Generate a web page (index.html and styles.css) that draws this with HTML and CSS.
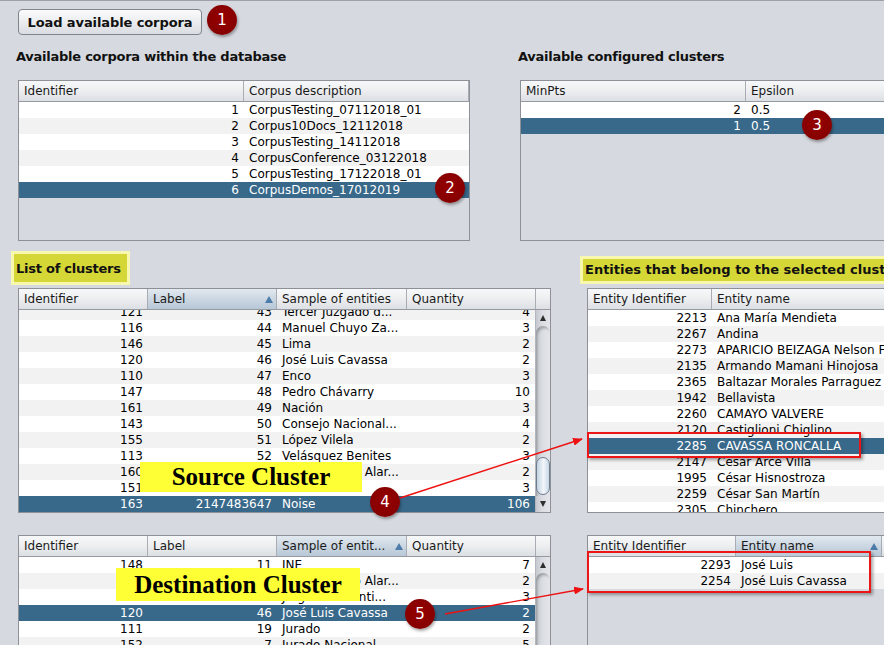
FILE: index.html
```html
<!DOCTYPE html>
<html>
<head>
<meta charset="utf-8">
<link rel="stylesheet" href="styles.css">
</head>
<body>
<div class="app">
  <div class="topbar"><button class="btn">Load available corpora</button></div>

  <div class="sec sec1">
    <div class="panel">
      <div class="title">Available corpora within the database</div>
      <div class="table t-corpora">
        <div class="thead"><div class="th">Identifier</div><div class="th">Corpus description</div></div>
        <div class="tbody"><div class="rows">
          <div class="tr"><div class="td num">1</div><div class="td">CorpusTesting_07112018_01</div></div>
          <div class="tr alt"><div class="td num">2</div><div class="td">Corpus10Docs_12112018</div></div>
          <div class="tr"><div class="td num">3</div><div class="td">CorpusTesting_14112018</div></div>
          <div class="tr alt"><div class="td num">4</div><div class="td">CorpusConference_03122018</div></div>
          <div class="tr"><div class="td num">5</div><div class="td">CorpusTesting_17122018_01</div></div>
          <div class="tr sel"><div class="td num">6</div><div class="td">CorpusDemos_17012019</div></div>
        </div></div>
      </div>
    </div>
    <div class="panel">
      <div class="title">Available configured clusters</div>
      <div class="table t-config">
        <div class="thead"><div class="th">MinPts</div><div class="th">Epsilon</div></div>
        <div class="tbody"><div class="rows">
          <div class="tr"><div class="td num">2</div><div class="td">0.5</div></div>
          <div class="tr sel"><div class="td num">1</div><div class="td">0.5</div></div>
        </div></div>
      </div>
    </div>
  </div>

  <div class="sec sec2">
    <div class="panel">
      <div class="label label-left">List of clusters</div>
      <div class="table t-clusters">
        <div class="thead"><div class="th">Identifier</div><div class="th sorted"><span>Label</span><span class="sort-up"></span></div><div class="th">Sample of entities</div><div class="th">Quantity</div><div class="th corner"></div></div>
        <div class="tbody">
          <div class="rows scrolled">
            <div class="tr alt"><div class="td num">121</div><div class="td num">43</div><div class="td">Tercer Juzgado d...</div><div class="td num">4</div></div>
            <div class="tr"><div class="td num">116</div><div class="td num">44</div><div class="td">Manuel Chuyo Za...</div><div class="td num">3</div></div>
            <div class="tr alt"><div class="td num">146</div><div class="td num">45</div><div class="td">Lima</div><div class="td num">2</div></div>
            <div class="tr"><div class="td num">120</div><div class="td num">46</div><div class="td">José Luis Cavassa</div><div class="td num">2</div></div>
            <div class="tr alt"><div class="td num">110</div><div class="td num">47</div><div class="td">Enco</div><div class="td num">3</div></div>
            <div class="tr"><div class="td num">147</div><div class="td num">48</div><div class="td">Pedro Chávarry</div><div class="td num">10</div></div>
            <div class="tr alt"><div class="td num">161</div><div class="td num">49</div><div class="td">Nación</div><div class="td num">3</div></div>
            <div class="tr"><div class="td num">143</div><div class="td num">50</div><div class="td">Consejo Nacional...</div><div class="td num">4</div></div>
            <div class="tr alt"><div class="td num">155</div><div class="td num">51</div><div class="td">López Vilela</div><div class="td num">2</div></div>
            <div class="tr"><div class="td num">113</div><div class="td num">52</div><div class="td">Velásquez Benites</div><div class="td num">3</div></div>
            <div class="tr alt"><div class="td num">160</div><div class="td num">53</div><div class="td">Eduardo Pino Alar...</div><div class="td num">2</div></div>
            <div class="tr"><div class="td num">151</div><div class="td num">54</div><div class="td">Narcón</div><div class="td num">3</div></div>
            <div class="tr sel"><div class="td num">163</div><div class="td num">2147483647</div><div class="td">Noise</div><div class="td num">106</div></div>
          </div>
          <div class="vscroll">
            <div class="sb-btn"><span class="tri-up"></span></div>
            <div class="sb-track"><div class="sb-thumb thumb-low"></div></div>
            <div class="sb-btn"><span class="tri-down"></span></div>
          </div>
        </div>
      </div>
    </div>
    <div class="panel">
      <div class="label label-right">Entities that belong to the selected cluster</div>
      <div class="table t-entities">
        <div class="thead"><div class="th">Entity Identifier</div><div class="th">Entity name</div></div>
        <div class="tbody"><div class="rows">
          <div class="tr"><div class="td num">2213</div><div class="td">Ana María Mendieta</div></div>
          <div class="tr alt"><div class="td num">2267</div><div class="td">Andina</div></div>
          <div class="tr"><div class="td num">2273</div><div class="td">APARICIO BEIZAGA Nelson Fidel</div></div>
          <div class="tr alt"><div class="td num">2135</div><div class="td">Armando Mamani Hinojosa</div></div>
          <div class="tr"><div class="td num">2365</div><div class="td">Baltazar Morales Parraguez</div></div>
          <div class="tr alt"><div class="td num">1942</div><div class="td">Bellavista</div></div>
          <div class="tr"><div class="td num">2260</div><div class="td">CAMAYO VALVERE</div></div>
          <div class="tr alt"><div class="td num">2120</div><div class="td">Castiglioni Chiglino</div></div>
          <div class="tr sel"><div class="td num">2285</div><div class="td">CAVASSA RONCALLA</div></div>
          <div class="tr alt"><div class="td num">2147</div><div class="td">César Arce Villa</div></div>
          <div class="tr"><div class="td num">1995</div><div class="td">César Hisnostroza</div></div>
          <div class="tr alt"><div class="td num">2259</div><div class="td">César San Martín</div></div>
          <div class="tr"><div class="td num">2305</div><div class="td">Chinchero</div></div>
        </div></div>
      </div>
    </div>
  </div>

  <div class="sec sec3">
    <div class="table t-dest">
      <div class="thead"><div class="th">Identifier</div><div class="th">Label</div><div class="th sorted"><span>Sample of entit...</span><span class="sort-up"></span></div><div class="th">Quantity</div><div class="th corner"></div></div>
      <div class="tbody">
        <div class="rows">
          <div class="tr"><div class="td num">148</div><div class="td num">11</div><div class="td">INE</div><div class="td num">7</div></div>
          <div class="tr alt"><div class="td num">160</div><div class="td num">53</div><div class="td">Eduardo Pino Alar...</div><div class="td num">2</div></div>
          <div class="tr"><div class="td num">134</div><div class="td num">32</div><div class="td">Jorge Luis Santi...</div><div class="td num">3</div></div>
          <div class="tr sel"><div class="td num">120</div><div class="td num">46</div><div class="td">José Luis Cavassa</div><div class="td num">2</div></div>
          <div class="tr"><div class="td num">111</div><div class="td num">19</div><div class="td">Jurado</div><div class="td num">2</div></div>
          <div class="tr alt"><div class="td num">152</div><div class="td num">7</div><div class="td">Jurado Nacional</div><div class="td num">5</div></div>
        </div>
        <div class="vscroll">
          <div class="sb-btn"><span class="tri-up"></span></div>
          <div class="sb-track"></div>
        </div>
      </div>
    </div>
    <div class="table t-members">
      <div class="thead"><div class="th">Entity Identifier</div><div class="th sorted"><span>Entity name</span><span class="sort-up"></span></div><div class="th"></div></div>
      <div class="tbody"><div class="rows">
        <div class="tr"><div class="td num">2293</div><div class="td">José Luis</div></div>
        <div class="tr alt"><div class="td num">2254</div><div class="td">José Luis Cavassa</div></div>
      </div></div>
    </div>
  </div>

  <div class="callout callout-src">Source Cluster</div>
  <div class="callout callout-dst">Destination Cluster</div>
  <div class="hl hl-1"></div>
  <div class="hl hl-2"></div>
  <svg class="arrows" width="884" height="645" viewBox="0 0 884 645">
    <defs>
      <marker id="head" markerWidth="10" markerHeight="8" refX="9" refY="4" orient="auto" markerUnits="userSpaceOnUse">
        <path d="M0,0 L10,4 L0,8 Z" fill="#ee1111"/>
      </marker>
    </defs>
    <line x1="400" y1="498" x2="582" y2="439" stroke="#ee1111" stroke-width="1.4" marker-end="url(#head)"/>
    <line x1="445" y1="614" x2="583" y2="589" stroke="#ee1111" stroke-width="1.4" marker-end="url(#head)"/>
  </svg>
  <div class="badge b1">1</div>
  <div class="badge b2">2</div>
  <div class="badge b3">3</div>
  <div class="badge b4">4</div>
  <div class="badge b5">5</div>
</div>
</body>
</html>
```

FILE: styles.css
```css
* { box-sizing: border-box; }
html, body { margin: 0; padding: 0; }
body {
  width: 884px;
  height: 645px;
  overflow: hidden;
  background: #d6d9df;
  font-family: "DejaVu Sans", sans-serif;
  font-size: 12px;
  color: #000;
}
.app {
  position: relative;
  width: 884px;
  height: 645px;
  overflow: hidden;
  border-top: 1px solid #9ea2a8;
}
.topbar { padding: 8px 0 0 18px; height: 34px; }
.btn {
  display: block;
  width: 184px;
  height: 26px;
  margin: 0;
  padding: 0;
  border: 1px solid #80858c;
  border-radius: 4px;
  background: linear-gradient(#fbfbfc, #e9ebee 55%, #d9dce1);
  font-family: "DejaVu Sans", sans-serif;
  font-weight: bold;
  font-size: 13px;
  letter-spacing: -0.1px;
  color: #111;
}
.sec { display: flex; align-items: flex-start; }
.sec1 { padding-left: 16px; gap: 48px; margin-top: 14px; }
.sec2 { padding-left: 11px; gap: 29px; margin-top: 10px; }
.sec3 { padding-left: 18px; gap: 36px; margin-top: 22px; }
.panel { display: flex; flex-direction: column; align-items: flex-start; }
.title {
  font-weight: bold;
  font-size: 13px;
  letter-spacing: -0.25px;
  height: 16px;
  line-height: 16px;
  margin-bottom: 15px;
  color: #111;
  white-space: nowrap;
}
.label {
  font-weight: bold;
  font-size: 13px;
  letter-spacing: -0.25px;
  background: #d5d736;
  border: 3px solid #f7f7ae;
  white-space: nowrap;
  color: #111;
}
.label-left { height: 34px; line-height: 29px; padding: 0 6px 0 2px; margin-bottom: 3px; }
.label-right { height: 28px; line-height: 22px; padding: 0 2px; margin-top: 5px; margin-bottom: 4px; width: 340px; overflow: hidden; letter-spacing: 0; }

.table {
  border: 1px solid #8d9197;
  background: #d6d9df;
  display: flex;
  flex-direction: column;
  overflow: hidden;
  flex: none;
}
.sec1 .table { margin-left: 2px; }
.sec2 .table { margin-left: 7px; }
.t-corpora { width: 452px; height: 161px; }
.t-config { width: 400px; height: 161px; }
.t-clusters { width: 533px; height: 225px; }
.t-entities { width: 330px; height: 225px; }
.t-dest { width: 533px; height: 140px; }
.t-members { width: 330px; height: 140px; }

.thead {
  display: grid;
  height: 21px;
  flex: none;
  border-bottom: 1px solid #979ba1;
  background: linear-gradient(#f7f8f9, #eceef0 50%, #dcdfe3);
}
.th {
  padding: 0 5px;
  line-height: 20px;
  border-right: 1px solid #a9adb3;
  white-space: nowrap;
  overflow: hidden;
  color: #1a1a1a;
}
.th.sorted {
  display: flex;
  justify-content: space-between;
  align-items: center;
  padding-right: 3px;
  background: linear-gradient(#e2e9f0, #cbd7e2 50%, #b8c8d7);
}
.th.corner { padding: 0; border-right: none; }
.sort-up {
  width: 0; height: 0;
  border-left: 4px solid transparent;
  border-right: 4px solid transparent;
  border-bottom: 7px solid #4d7cab;
}
.tbody { flex: 1; display: flex; overflow: hidden; min-height: 0; }
.rows { flex: 1; overflow: hidden; }
.rows.scrolled > .tr:first-child { margin-top: -6px; }
.tr { display: grid; height: 16px; line-height: 16px; background: #fff; }
.tr.alt { background: #f2f2f2; }
.tr.sel { background: #39698a; color: #fff; }
.td { padding: 0 5px; white-space: nowrap; overflow: hidden; }
.td.num { text-align: right; }

.t-corpora .thead, .t-corpora .tr,
.t-config .thead, .t-config .tr { grid-template-columns: 225px 1fr; }
.t-clusters .thead, .t-dest .thead { grid-template-columns: 129px 129px 130px 129px 1fr; }
.t-clusters .tr, .t-dest .tr { grid-template-columns: 129px 129px 130px 1fr; }
.t-entities .thead, .t-entities .tr { grid-template-columns: 124px 1fr; }
.t-members .thead { grid-template-columns: 148px 146px 1fr; }
.t-members .tr { grid-template-columns: 148px 1fr; }

.vscroll {
  width: 15px;
  flex: none;
  display: flex;
  flex-direction: column;
  background: linear-gradient(to right, #c5c9cf, #dadde2 45%, #e3e5e9);
  border-left: 1px solid #b3b7bd;
}
.sb-btn {
  height: 16px;
  flex: none;
  display: flex;
  align-items: center;
  justify-content: center;
}
.tri-up, .tri-down {
  width: 0; height: 0;
  border-left: 3px solid transparent;
  border-right: 3px solid transparent;
}
.tri-up { border-bottom: 6px solid #2e2e2e; }
.tri-down { border-top: 6px solid #2e2e2e; }
.sb-track {
  flex: 1;
  border-radius: 7px 7px 0 0;
  box-shadow: inset 2px 3px 3px -1px rgba(0,0,0,0.28);
}
.sb-thumb {
  height: 38px;
  border: 1px solid #6e7c8b;
  border-radius: 7px;
  background: linear-gradient(to right, #c2d3e3, #f2f6fa 55%, #c7d7e6);
}
.thumb-low { margin-top: 131px; }

.callout {
  position: absolute;
  background: #ffff36;
  font-family: "Liberation Serif", "Times New Roman", serif;
  font-weight: bold;
  font-size: 25px;
  text-align: center;
  color: #000;
  white-space: nowrap;
}
.callout-src { left: 140px; top: 461px; width: 222px; height: 30px; line-height: 30px; }
.callout-dst { left: 116px; top: 567px; width: 244px; height: 33px; line-height: 33px; }

.hl {
  position: absolute;
  border: 2px solid #ec1616;
  box-shadow: 2px 2px 3px rgba(0,0,0,0.35);
}
.hl-1 { left: 587px; top: 431px; width: 274px; height: 26px; }
.hl-2 { left: 587px; top: 550px; width: 284px; height: 42px; }

.arrows { position: absolute; left: 0; top: -1px; pointer-events: none; }

.badge {
  position: absolute;
  width: 30px;
  height: 30px;
  border-radius: 50%;
  background: radial-gradient(circle at 50% 45%, #960000, #860000 70%, #7a0000);
  color: #fff;
  font-family: "DejaVu Sans", sans-serif;
  font-size: 15px;
  line-height: 30px;
  text-align: center;
  box-shadow: 1px 2px 3px rgba(0,0,0,0.35);
}
.b1 { left: 207px; top: 4px; }
.b2 { left: 435px; top: 172px; }
.b3 { left: 802px; top: 109px; }
.b4 { left: 370px; top: 486px; }
.b5 { left: 405px; top: 598px; }
```
